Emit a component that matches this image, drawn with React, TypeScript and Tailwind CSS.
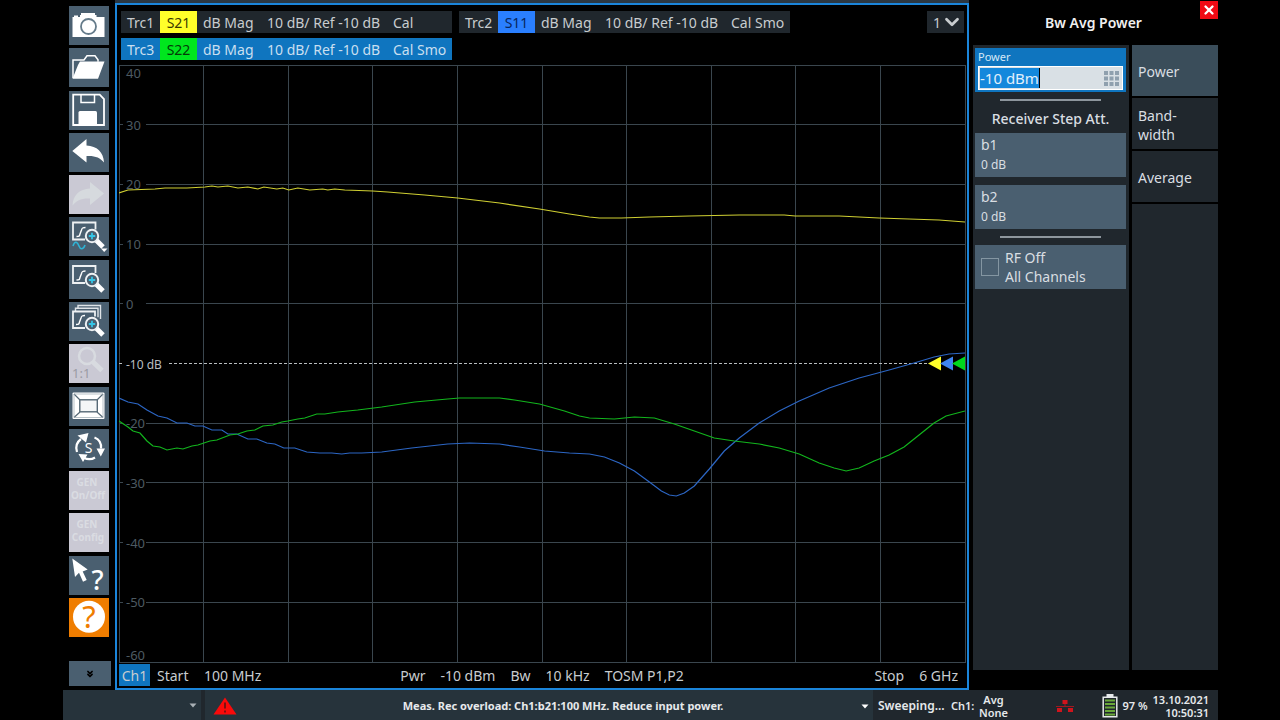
import { useState, type ReactNode } from 'react';
import { ChevronDown, ChevronsDown, X } from 'lucide-react';
import clsx from 'clsx';

type Trace = {
  name: string;
  param: string;
  badge: string;
  cal: string;
  active?: boolean;
};

const traces: Trace[] = [
  { name: 'Trc1', param: 'S21', badge: 'bg-[#ffff2a] text-[#3a3a00]', cal: 'Cal' },
  { name: 'Trc2', param: 'S11', badge: 'bg-[#2a7fff] text-[#06245c]', cal: 'Cal Smo' },
  { name: 'Trc3', param: 'S22', badge: 'bg-[#00e61e] text-[#043c08]', cal: 'Cal Smo', active: true },
];

const curves = [
  {
    color: '#cfcf32',
    points:
      '119,193 128,190 155,189 165,188 187,188 205,187 212,186 218,187 228,186 238,188 248,187 258,189 264,187 277,189 283,188 289,190 298,188 310,190 323,189 328,190 335,189 345,190 373,191 388,192 425,195 458,198 500,203 540,209 570,214 590,217 600,218 622,218 650,217 690,216 740,215 785,215 796,216 840,216 880,218 910,219 940,220 966,222',
  },
  {
    color: '#2c66c4',
    points:
      '119,398 128,402 138,404 147,410 158,416 167,418 177,423 187,423 195,426 203,426 212,430 222,430 228,434 237,434 248,439 257,439 267,443 275,444 284,448 295,448 307,452 320,453 332,453 342,454 350,453 362,453 382,452 412,448 448,444 470,443 500,444 520,447 545,451 570,453 590,454 605,457 620,463 635,471 650,482 662,491 670,495 677,496 685,493 695,486 710,469 725,451 740,438 760,423 780,411 800,401 830,388 860,378 890,370 915,363 935,357 950,354 966,353',
  },
  {
    color: '#12b51d',
    points:
      '119,421 128,427 133,431 140,433 147,441 153,446 160,447 167,450 177,448 183,449 192,446 198,445 210,441 217,440 230,435 238,434 247,431 255,430 263,426 273,425 282,422 288,421 298,419 305,418 317,414 325,414 338,412 358,410 382,407 415,402 448,399 460,398 500,398 515,400 540,404 565,411 580,416 590,418 615,419 635,417 655,418 675,424 695,431 715,438 735,441 760,444 780,448 800,454 820,463 835,468 847,471 860,468 875,461 890,455 905,447 920,435 935,423 947,416 966,411',
  },
];

const tenths = [1, 2, 3, 4, 5, 6, 7, 8, 9];
const levels = ['30', '20', '10', '0', '-10 dB', '-20', '-30', '-40', '-50'];

function Magnifier({ y = 0 }: { y?: number }) {
  return (
    <g transform={`translate(0 ${y})`}>
      <path d="M27.5 23.5l6.5 6.5" stroke="#fff" strokeWidth="5" />
      <circle cx="23" cy="19" r="6.2" fill="#4a5f70" stroke="#eef1f3" strokeWidth="2" />
      <path d="M23 15.8v6.4M19.8 19h6.4" stroke="#35c5e6" strokeWidth="1.8" />
    </g>
  );
}

function Icon({ children }: { children: ReactNode }) {
  return (
    <svg viewBox="0 0 40 39" className="block size-full overflow-visible" fill="none" aria-hidden="true">
      {children}
    </svg>
  );
}

type Tool = { label: string; disabled?: boolean; orange?: boolean; icon: ReactNode };

const tools: Tool[] = [
  {
    label: 'Screenshot',
    icon: (
      <>
        <path d="M3.5 11H5V9.500h4V11h2V9h1V7h14v2h1.500v2h8v20H3.500z" fill="#fff" />
        <circle cx="19.500" cy="20.500" r="7.500" stroke="#657b8a" strokeWidth="1.800" />
      </>
    ),
  },
  {
    label: 'Open',
    icon: (
      <>
        <path d="M4 30V12h11l3-4.200h8l3 4v2" stroke="#fff" strokeWidth="1.500" />
        <path d="M11 13.500h24.500L29 30.700H3.500L9 17z" fill="#fff" />
      </>
    ),
  },
  {
    label: 'Save',
    icon: (
      <>
        <path d="M4.200 3.700h26.500l4.300 4.300v26H4.200z" stroke="#fff" strokeWidth="1.800" />
        <path d="M12 4v7.500h13.500V4" stroke="#fff" strokeWidth="1.500" />
        <path d="M9.500 34V21.500q0-1.500 1.500-1.500h15.500q1.500 0 1.500 1.500V34z" fill="#fff" />
      </>
    ),
  },
  {
    label: 'Undo',
    icon: <path d="M3.300 18L17.500 6v6.500C28 13 34.500 19 35 29.500 31 24.500 26 22.500 17.500 23v6.500z" fill="#fff" />,
  },
  {
    label: 'Redo',
    disabled: true,
    icon: <path d="M35 18.500L21 7v6.500C10.500 14 4 20 3.500 30.500 7.500 25.500 12.500 23 21 23.500V30z" fill="#d6dade" />,
  },
  {
    label: 'Zoom config',
    icon: (
      <>
        <path d="M16 22.500H4V5.500h22.500v7" stroke="#eef1f3" strokeWidth="1.800" />
        <path d="M7.500 19.500c2.500 0 3 0 3.500-2.500l1.500-4c.5-2 1-2.500 4-2.500" stroke="#fff" strokeWidth="1.400" />
        <path d="M4 29c2-6 4.500-4 6 0s4.500 3.500 6-1" stroke="#2fb4d6" strokeWidth="1.600" />
        <Magnifier />
        <path d="M32 31.500h6.500L35.200 35z" fill="#fff" />
      </>
    ),
  },
  {
    label: 'Zoom',
    icon: (
      <>
        <path d="M16 23H4V6h22.500v7" stroke="#eef1f3" strokeWidth="1.800" />
        <path d="M7.500 20c2.500 0 3 0 3.500-2.500l1.500-4c.5-2 1-2.500 4-2.500" stroke="#fff" strokeWidth="1.400" />
        <Magnifier y={1} />
      </>
    ),
  },
  {
    label: 'Zoom all',
    icon: (
      <>
        <path d="M9 6V3.500h22.500V17M6.500 9V6.300H29v9" stroke="#dfe4e8" strokeWidth="1.400" />
        <path d="M16 26H4V9.500h22v5" stroke="#eef1f3" strokeWidth="1.800" />
        <path d="M7 22.500c2.500 0 3 0 3.500-2.500l1.500-4c.5-2 1-2.500 4-2.500" stroke="#fff" strokeWidth="1.400" />
        <Magnifier y={3} />
      </>
    ),
  },
  {
    label: 'Zoom reset',
    disabled: true,
    icon: (
      <>
        <circle cx="18" cy="12" r="8" stroke="#d8dbe0" strokeWidth="2.500" />
        <path d="M24 18l9 8.500" stroke="#d8dbe0" strokeWidth="5" />
        <text x="3" y="34" fontSize="13" fill="#9b9ba5">
          1:1
        </text>
      </>
    ),
  },
  {
    label: 'Full screen',
    icon: (
      <>
        <rect x="3.500" y="5.500" width="32" height="26.500" rx="1" fill="#fff" />
        <path d="M5 7l6 6M34 7l-6 6M5 30.500L11 25M34 30.500L28 25" stroke="#566976" strokeWidth="1.200" />
        <rect x="10.800" y="12.800" width="17.500" height="12" fill="#f4f6f7" stroke="#566976" strokeWidth="1.400" />
        <path d="M5 7h29v23.500H5z" stroke="#9aa7b0" strokeWidth=".7" />
      </>
    ),
  },
  {
    label: 'Restart sweep',
    icon: (
      <>
        <path d="M8 23c-2-6 0-10 4-13M25.500 8.500c5 2 7 6 6.500 11M26 28.500c-4 2.500-8 2-11.500 0" stroke="#fff" strokeWidth="2.200" />
        <path d="M8.500 6.500L19.500 4l-2.500 9.500zM27.500 19.500h8.500l-4.200 8zM9.500 25l9 .5-4.500 7.500z" fill="#fff" />
        <text x="19.500" y="23.500" fontSize="14" fill="#fff" textAnchor="middle">
          S
        </text>
      </>
    ),
  },
  {
    label: 'Generator on/off',
    disabled: true,
    icon: (
      <g fill="#dadce2" fontSize="10" fontWeight="700" textAnchor="middle">
        <text x="18" y="15">
          GEN
        </text>
        <text x="19" y="28">
          On/Off
        </text>
      </g>
    ),
  },
  {
    label: 'Generator config',
    disabled: true,
    icon: (
      <g fill="#dadce2" fontSize="10" fontWeight="700" textAnchor="middle">
        <text x="18" y="15">
          GEN
        </text>
        <text x="19" y="28">
          Config
        </text>
      </g>
    ),
  },
  {
    label: 'Context help',
    icon: (
      <>
        <path d="M3.300 2.500L6 21l4-4.300 4 9 3.700-1.800-4-8.500 5-2z" fill="#fff" />
        <text x="28.500" y="33.500" fontSize="27" fontWeight="500" fill="#fff" textAnchor="middle">
          ?
        </text>
      </>
    ),
  },
  {
    label: 'Help',
    orange: true,
    icon: (
      <>
        <circle cx="20" cy="18.700" r="16" fill="#fff" />
        <text x="20" y="30" fontSize="31" fill="#ef7d00" textAnchor="middle">
          ?
        </text>
      </>
    ),
  },
];

function Toolbar() {
  return (
    <nav className="flex w-[52px] shrink-0 flex-col pt-1.5 pl-1.5 pb-1">
      <div className="flex flex-1 flex-col justify-between">
        {tools.map((tool) => (
          <button
            key={tool.label}
            type="button"
            aria-label={tool.label}
            disabled={tool.disabled}
            className={clsx(
              'h-[39px] w-10',
              tool.disabled ? 'bg-[#cac9d4]' : tool.orange ? 'bg-[#ef7d00]' : 'bg-[#4a5f70]',
            )}
          >
            <Icon>{tool.icon}</Icon>
          </button>
        ))}
      </div>
      <button
        type="button"
        aria-label="More tools"
        className="mt-6 flex h-[25px] w-[42px] items-center justify-center bg-[#4a5f70] text-black"
      >
        <ChevronsDown className="size-2.5" strokeWidth={4} />
      </button>
    </nav>
  );
}

function TraceBar({ trace }: { trace: Trace }) {
  return (
    <button
      type="button"
      className={clsx(
        'grid h-[22px] w-[331px] grid-cols-[39px_37px_70px_126px_1fr] items-center text-left whitespace-nowrap',
        trace.active ? 'bg-[#0f75bf] text-[#c9dff0]' : 'bg-[#20272d] text-[#c8cccf]',
      )}
    >
      <span className="pl-1.5">{trace.name}</span>
      <span className={clsx('flex h-full items-center justify-center', trace.badge)}>{trace.param}</span>
      <span className="pl-1.5">dB Mag</span>
      <span>10 dB/ Ref -10 dB</span>
      <span>{trace.cal}</span>
    </button>
  );
}

function Plot() {
  return (
    <svg className="block min-h-0 w-full flex-1 overflow-visible" fontSize="13" role="img" aria-label="S-parameter traces">
      <g stroke="#3a464e" shapeRendering="crispEdges">
        <rect x="0" y="0" width="100%" height="100%" fill="none" />
        {tenths.map((n) => (
          <line key={n} x1={`${n * 10}%`} x2={`${n * 10}%`} y1="0" y2="100%" />
        ))}
        {tenths
          .filter((n) => n !== 5)
          .map((n) => (
            <line key={n} x1="0" x2="100%" y1={`${n * 10}%`} y2={`${n * 10}%`} />
          ))}
        <line x1="0" x2="100%" y1="50%" y2="50%" stroke="#b9bdc0" strokeDasharray="3 2" />
      </g>

      {levels.map((level, i) => {
        const isRef = i === 4;
        return (
          <svg key={level} y={`${(i + 1) * 10}%`} className="overflow-visible">
            <rect x="4" y="-8" width={isRef ? 44 : 23} height="16" fill="#000" />
            <text x="7" y="5" fontSize={isRef ? 12 : 13} fill={isRef ? '#b9bdc0' : '#4d5a62'}>
              {level}
            </text>
          </svg>
        );
      })}
      <text x="7" y="13" fill="#4d5a62">
        40
      </text>
      <svg y="100%" className="overflow-visible">
        <text x="7" y="-2" fill="#4d5a62">
          -60
        </text>
      </svg>

      <svg width="100%" height="100%" viewBox="119 65 847 597" preserveAspectRatio="none">
        {curves.map((curve) => (
          <polyline
            key={curve.color}
            points={curve.points}
            fill="none"
            stroke={curve.color}
            strokeWidth="1.200"
            vectorEffect="non-scaling-stroke"
          />
        ))}
      </svg>

      {/* reference level markers */}
      <svg x="100%" y="50%" className="overflow-visible">
        <path d="M-37 0l13-7v14z" fill="#ffff2a" />
        <path d="M-25 0l13-7v14z" fill="#3f85f0" />
        <path d="M-13 0l13-7v14z" fill="#00d81e" />
      </svg>
    </svg>
  );
}

function ChartPanel() {
  return (
    <main className="flex min-w-0 flex-1 flex-col border-t-[3px] border-[#2b3742]">
      <div className="flex flex-1 flex-col border-2 border-[#1b85da] px-0.5 pt-1.5 pb-0.5 text-[14px]">
        <div className="flex items-start justify-between pr-px pl-0.5">
          <div className="flex flex-wrap gap-x-[7px] gap-y-[5px]">
            {traces.map((trace) => (
              <TraceBar key={trace.name} trace={trace} />
            ))}
          </div>
          <div className="relative shrink-0 text-[#c8cccf]">
            <select aria-label="Window" className="h-[22px] w-[37px] appearance-none bg-[#20272d] pl-1.5">
              <option>1</option>
            </select>
            <ChevronDown className="pointer-events-none absolute top-0 right-0 h-[22px] w-6" strokeWidth={3} />
          </div>
        </div>

        <div className="mt-[5px] flex flex-1 flex-col">
          <Plot />
        </div>

        <div className="mt-0.5 grid h-[22px] grid-cols-[1fr_auto_1fr] items-center whitespace-nowrap text-[#c8cccf]">
          <div className="flex items-center">
            <span className="flex h-[22px] w-[31px] items-center justify-center bg-[#0f75bf]">Ch1</span>
            <span className="ml-[7px] w-[47px]">Start</span>
            <span>100 MHz</span>
          </div>
          <div className="flex gap-[15px]">
            <span>Pwr</span>
            <span>-10 dBm</span>
            <span>Bw</span>
            <span>10 kHz</span>
            <span>TOSM P1,P2</span>
          </div>
          <div className="flex justify-end gap-[15px] pr-[7px]">
            <span>Stop</span>
            <span>6 GHz</span>
          </div>
        </div>
      </div>
    </main>
  );
}

function Divider() {
  return <hr className="mx-[25px] h-0.5 border-0 bg-[#8d969d]" />;
}

function SidePanel() {
  const [power, setPower] = useState('-10 dBm');
  const [rfOff, setRfOff] = useState(false);
  const [tab, setTab] = useState('Power');

  return (
    <aside className="flex w-[245px] shrink-0 flex-col pb-5 text-[#d9dee2]">
      <header className="relative flex h-[45px] items-center justify-center pr-1 text-[14px] font-semibold text-[#f0f0f0]">
        <h1>Bw Avg Power</h1>
        <button
          type="button"
          aria-label="Close"
          className="absolute top-px right-0 flex size-[18px] items-center justify-center bg-[#f00a14] text-white"
        >
          <X className="size-3.5" strokeWidth={4} />
        </button>
      </header>

      <div className="flex flex-1 gap-[3px]">
        <section className="flex w-[156px] flex-col bg-[#20272d] pt-[3px] pr-[3px] pl-0.5">
          <div className="h-11 bg-[#0f75bf] px-[3px]">
            <label htmlFor="power" className="block h-[18px] text-[11px] leading-[17px] text-[#d5e8f7]">
              Power
            </label>
            <div className="flex h-6 items-center justify-between border border-white bg-[#d9e0e5] pr-[3px] pl-px">
              <input
                id="power"
                value={power}
                onChange={(e) => setPower(e.target.value)}
                className="field-sizing-content h-5 border-r border-black bg-[#1488dc] text-[15px] text-[#e2f0fb] outline-none"
              />
              <svg className="size-[15px]" viewBox="0 0 15 15" fill="#8fa0ae" aria-hidden="true">
                {[0, 5.5, 11].map((y) => [0, 5.5, 11].map((x) => <rect key={`${x}-${y}`} x={x} y={y} width="4" height="4" />))}
              </svg>
            </div>
          </div>

          <div className="mt-[7px]">
            <Divider />
          </div>
          <h2 className="flex h-8 items-center justify-center pt-0.5 text-[14px] font-medium">Receiver Step Att.</h2>

          <div className="flex flex-col gap-2">
            {['b1', 'b2'].map((name) => (
              <button key={name} type="button" className="h-[44px] bg-[#4a5f70] px-1.5 text-left">
                <span className="block text-[14px] leading-5">{name}</span>
                <span className="block text-[12px] leading-5">0 dB</span>
              </button>
            ))}
          </div>

          <div className="my-[7px]">
            <Divider />
          </div>

          <label className="flex h-[44px] items-center gap-1.5 bg-[#4a5f70] px-1.5 text-[14px] leading-[19px]">
            <input
              type="checkbox"
              checked={rfOff}
              onChange={(e) => setRfOff(e.target.checked)}
              className="size-[18px] appearance-none border border-[#8496a2] checked:bg-[#1488dc]"
            />
            <span>
              RF Off
              <br />
              All Channels
            </span>
          </label>
        </section>

        <div className="flex flex-1 flex-col gap-0.5" role="tablist">
          {['Power', 'Band-\nwidth', 'Average'].map((name) => (
            <button
              key={name}
              type="button"
              role="tab"
              aria-selected={tab === name}
              onClick={() => setTab(name)}
              className={clsx(
                'h-[51px] px-1.5 pt-0.5 text-left text-[14px] leading-[19px] whitespace-pre-line',
                tab === name ? 'bg-[#3a4d5a]' : 'bg-[#20272d]',
              )}
            >
              {name}
            </button>
          ))}
          <div className="flex-1 bg-[#20272d]" />
        </div>
      </div>
    </aside>
  );
}

function StatusBar() {
  return (
    <footer className="flex h-[30px] shrink-0 bg-[#20272d] text-[12px] font-semibold whitespace-nowrap text-[#e6e9eb]">
      <div className="mr-1 flex w-[138px] items-center justify-end bg-[#26333b] pr-1">
        <svg className="size-2" viewBox="0 0 8 8" fill="#a9b0b5" aria-hidden="true">
          <path d="M.5 2.500h7L4 6.500z" />
        </svg>
      </div>
      <div className="flex flex-1 items-center bg-[#26333b] pt-0.5 pr-1 pl-2">
        <svg className="h-[18px] w-6" viewBox="0 0 24 18" aria-hidden="true">
          <path d="M12 .5L23.500 17.500H.5z" fill="#fa0a0a" />
          <path d="M12 5.500v6M12 13.500v2" stroke="#7d1010" strokeWidth="2" />
        </svg>
        <p className="flex-1 pl-7 text-center text-[11px] font-bold">
          Meas. Rec overload: Ch1:b21:100 MHz. Reduce input power.
        </p>
        <svg className="size-2" viewBox="0 0 8 8" fill="#fff" aria-hidden="true">
          <path d="M.5 2.500h7L4 6.500z" />
        </svg>
      </div>
      <div className="flex w-[345px] items-center pt-0.5 pr-[9px] pl-[5px]">
        <span className="w-[73px]">Sweeping...</span>
        <span className="w-7 text-[11px]">Ch1:</span>
        <span className="text-center text-[11px] leading-[13px]">
          Avg
          <br />
          None
        </span>
        <svg className="ml-auto h-3 w-[18px]" viewBox="0 0 18 12" aria-hidden="true">
          <path d="M6.500 0h5v4h-5zM1 8h5v4H1zM12 8h5v4h-5z" fill="#d0141c" />
          <path d="M9 4v2M0 6.500h18" stroke="#a01820" strokeWidth="1" />
        </svg>
        <svg className="ml-7 h-6 w-4" viewBox="0 0 16 24" fill="none" aria-hidden="true">
          <path d="M1.200 3.200h13.600v19.600H1.200z" stroke="#e6e9eb" strokeWidth="1.500" />
          <path d="M4.500 0h7v3h-7z" fill="#e6e9eb" />
          <path d="M3 6.500h10M3 10h10M3 13.500h10M3 17h10M3 20.500h10" stroke="#6aa83a" strokeWidth="2.200" />
        </svg>
        <span className="ml-[5px] text-[11px]">97 %</span>
        <span className="ml-[5px] text-right text-[11px] leading-[13px]">
          13.10.2021
          <br />
          10:50:31
        </span>
      </div>
    </footer>
  );
}

export default function App() {
  return (
    <div className="h-screen min-h-[680px] bg-black px-[63px] pr-[62px] font-['Noto_Sans',sans-serif]">
      <div className="flex h-full flex-col">
        <div className="flex min-h-0 flex-1">
          <Toolbar />
          <ChartPanel />
          <div className="w-1 shrink-0" />
          <SidePanel />
        </div>
        <StatusBar />
      </div>
    </div>
  );
}
